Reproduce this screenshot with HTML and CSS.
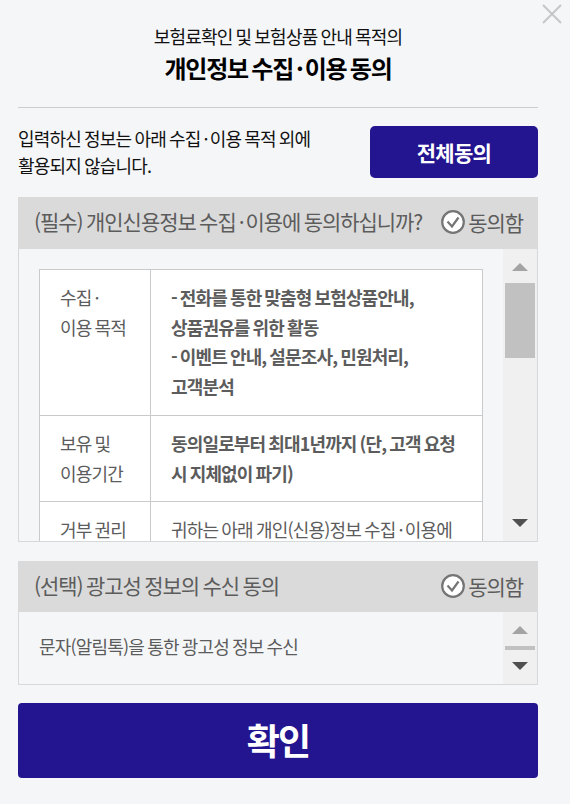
FILE: index.html
```
<!DOCTYPE html>
<html lang="ko">
<head>
  <meta charset="UTF-8">
  <title>개인정보 수집·이용 동의</title>
  <link rel="stylesheet" href="styles.css">
</head>
<body>

  <div class="popup">
    <button type="button" class="close" aria-label="닫기">
      <svg width="20" height="20" viewBox="0 0 20 20"><path d="M1 1L19 19M19 1L1 19" /></svg>
    </button>

    <header class="title">
      <p>보험료확인 및 보험상품 안내 목적의</p>
      <h1>개인정보 수집<span class="dot">·</span>이용 동의</h1>
    </header>

    <div class="intro">
      <p>입력하신 정보는 아래 수집<span class="dot">·</span>이용 목적 외에<br>활용되지 않습니다.</p>
      <button type="button" class="btn-all">전체동의</button>
    </div>

    <section class="agree">
      <div class="agree-head">
        <h2>(필수) 개인신용정보 수집<span class="dot">·</span>이용에 동의하십니까?</h2>
        <span class="check">
          <svg width="24" height="24" viewBox="0 0 24 24"><circle cx="12" cy="12" r="10.8" /><path d="M6.5 11.5L11 16.5L17.5 7.5" /></svg>
          동의함
        </span>
      </div>
      <div class="agree-body terms">
        <div class="content">
          <table>
            <tbody>
              <tr>
                <th>수집<span class="dot">·</span><br>이용 목적</th>
                <td><strong>- 전화를 통한 맞춤형 보험상품안내,<br>상품권유를 위한 활동<br>- 이벤트 안내, 설문조사, 민원처리,<br>고객분석</strong></td>
              </tr>
              <tr>
                <th>보유 및<br>이용기간</th>
                <td><strong>동의일로부터 최대1년까지 (단, 고객 요청<br>시 지체없이 파기)</strong></td>
              </tr>
              <tr>
                <th>거부 권리</th>
                <td>귀하는 아래 개인(신용)정보 수집<span class="dot">·</span>이용에</td>
              </tr>
            </tbody>
          </table>
        </div>
        <div class="scrollbar">
          <span class="arrow up"></span>
          <span class="thumb"></span>
          <span class="arrow down"></span>
        </div>
      </div>
    </section>

    <section class="agree optional">
      <div class="agree-head">
        <h2>(선택) 광고성 정보의 수신 동의</h2>
        <span class="check">
          <svg width="24" height="24" viewBox="0 0 24 24"><circle cx="12" cy="12" r="10.8" /><path d="M6.5 11.5L11 16.5L17.5 7.5" /></svg>
          동의함
        </span>
      </div>
      <div class="agree-body">
        <p class="content">문자(알림톡)을 통한 광고성 정보 수신</p>
        <div class="scrollbar">
          <span class="arrow up"></span>
          <span class="thumb"></span>
          <span class="arrow down"></span>
        </div>
      </div>
    </section>

    <button type="button" class="btn-confirm">확인</button>
  </div>

</body>
</html>
```
FILE: styles.css
```
* {
  box-sizing: border-box;
  margin: 0;
  padding: 0;
}

body {
  background: #f5f6f8;
  color: #111;
  font-family: "Noto Sans CJK KR", sans-serif;
  font-size: 18px;
  letter-spacing: -0.8px;
  word-spacing: -1.2px;
}

button {
  border: 0;
  background: #23148f;
  color: #fff;
  font-family: inherit;
  font-weight: 700;
  letter-spacing: -0.05em;
}

.dot {
  padding: 0 2px 0 3px;
}

.popup {
  position: relative;
  height: 803px;
  padding: 0 32px 0 18px;
}

.close {
  position: absolute;
  top: 4px;
  right: 8px;
  width: 20px;
  height: 20px;
  background: none;
}

.close svg {
  display: block;
  fill: none;
  stroke: #c6c7c8;
  stroke-width: 2;
}

/* title */
.title {
  height: 108px;
  padding-top: 23px;
  border-bottom: 1px solid #cbccce;
  text-align: center;
}

.title p {
  line-height: 27px;
}

.title h1 {
  color: #000;
  font-size: 24px;
  letter-spacing: -1.2px;
  word-spacing: -2.2px;
  line-height: 36px;
}

.intro {
  display: flex;
  justify-content: space-between;
  align-items: flex-start;
  height: 89px;
  padding-top: 18px;
}

.intro p {
  margin-top: -1px;
  line-height: 27px;
}

.btn-all {
  width: 168px;
  height: 52px;
  padding-bottom: 1px;
  border-radius: 5px;
  font-size: 21px;
  letter-spacing: -0.7px;
}

/* agreement boxes */
.agree {
  color: #5c5c5c;
}

.agree-head {
  display: flex;
  justify-content: space-between;
  align-items: center;
  height: 52px;
  padding: 0 15px 2px 16px;
  background: #dadada;
  letter-spacing: -1.05px;
  word-spacing: -1.4px;
}

.agree-head h2 {
  padding-bottom: 2px;
  font-size: 21px;
  font-weight: 400;
}

.check {
  display: flex;
  align-items: center;
  gap: 3px;
  font-size: 21px;
}

.check svg {
  fill: #fff;
  stroke: #757575;
  stroke-width: 2.2;
}

.agree-body {
  display: flex;
  height: 293px;
  border: 1px solid #d7d8da;
  border-top: 0;
  overflow: hidden;
}

.content {
  flex: 1;
  padding: 20px;
}

table {
  width: 444px;
  border-collapse: collapse;
  background: #fff;
}

th, td {
  padding: 13px 20px;
  border: 1px solid #c9cacc;
  font-weight: 400;
  line-height: 29.7px;
  text-align: left;
  vertical-align: top;
  white-space: nowrap;
}

th {
  width: 111px;
}

td strong {
  letter-spacing: -0.85px;
}

/* scrollbar */
.scrollbar {
  display: flex;
  flex-direction: column;
  align-items: center;
  width: 34px;
  padding: 14px 0;
  background: #f0f0f0;
}

.arrow {
  border: 8px solid transparent;
}

.up {
  border-top: 0;
  border-bottom-color: #a3a3a3;
}

.down {
  margin-top: auto;
  border-bottom: 0;
  border-top-color: #505050;
}

.thumb {
  width: 30px;
  height: 75px;
  margin-top: 12px;
  background: #c1c1c1;
}

.optional {
  margin-top: 19px;
}

.optional .agree-head {
  height: 51px;
}

.optional .agree-body {
  height: 73px;
}

.optional .content {
  line-height: 29px;
}

.optional .thumb {
  height: 4px;
}

.btn-confirm {
  display: block;
  width: 100%;
  height: 75px;
  margin-top: 18px;
  padding-bottom: 3px;
  border-radius: 4px;
  font-size: 36px;
}
```
